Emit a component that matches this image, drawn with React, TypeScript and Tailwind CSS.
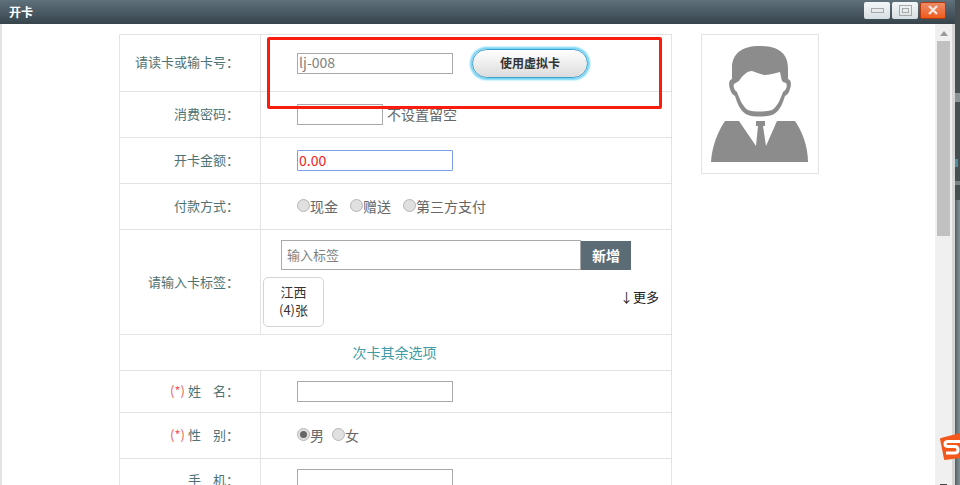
const font = { fontFamily: '"Noto Sans CJK SC", "Liberation Sans", sans-serif' };

const Avatar = () => (
  <svg viewBox="0 0 116 138" className="h-[138px] w-[116px]">
    <path
      fill="#8c8c8c"
      fillRule="evenodd"
      d="M58 11C39 11 30 19 30 33V44C26 45 27 51 28 54C29 58 31 60 33 61C36 71 40 78 46 80C51 82 65 82 70 80C76 78 80 71 83 61C85 60 87 58 88 54C89 51 90 45 86 44V33C86 19 77 11 58 11ZM37 46C40 41 45 36 50 36C54 37 57 39 62 40C67 40 73 38 78 37C79 41 79 45 81 47L84 48C86 51 84 55 81 57C78 65 75 72 70 75C65 77 51 77 46 75C41 72 38 65 35 57C32 55 31 51 32 49Z"
    />
    <path
      fill="#8c8c8c"
      d="M23 86H37L54 111L56 91H54V86H63V91H61L64 111L75 86H93C100 96 106 111 106 127H9C10 111 16 96 23 86Z"
    />
  </svg>
);

const Radio = ({ checked }: { checked?: boolean }) => (
  <span className="mb-[3px] inline-flex h-[13px] w-[13px] flex-none items-center justify-center rounded-full border border-[#b5b5b5] bg-[#e0e0e0]">
    {checked && <span className="h-[7px] w-[7px] rounded-full bg-[#666]" />}
  </span>
);

const Label = ({ children, className = 'pb-[2px]' }: { children: React.ReactNode; className?: string }) => (
  <div className={`flex w-[141px] flex-none items-center justify-end border-r border-[#e3e3e3] pr-[21px] text-[13px] text-[#4e7273] ${className}`}>{children}</div>
);

const Row = ({ label, className, children }: { label: React.ReactNode; className: string; children: React.ReactNode }) => (
  <div className={`flex border-b border-[#e3e3e3] ${className}`}>
    <Label>{label}</Label>
    <div className="flex flex-1 items-center pl-[36px] text-[14px] text-[#666]">{children}</div>
  </div>
);

const TextBox = ({ className = 'w-[156px]', value = '' }: { className?: string; value?: string }) => (
  <div className={`flex h-[21px] flex-none items-center border border-[#a9a9a9] px-px pb-[2px] text-[14px] leading-none text-[#808080] ${className}`}>{value}</div>
);

export default function App() {
  return (
    <div className="relative flex h-[485px] w-[960px] overflow-hidden bg-white" style={font}>
      <div className="flex w-[955px] flex-none flex-col">
        <div className="flex h-[24px] flex-none items-center justify-between bg-gradient-to-b from-[#5f717c] to-[#37444c] pr-[9px] pl-[9px]">
          <span className="text-[12px] font-bold text-white">开卡</span>
          <div className="mb-[4px] flex gap-[2px]">
            <div className="flex h-[17px] w-[26px] items-center justify-center rounded-[2px] bg-gradient-to-b from-[#f4f7f8] to-[#d6dfe3]">
              <span className="h-[5px] w-[13px] border border-[#a8a8a8]" />
            </div>
            <div className="flex h-[17px] w-[26px] items-center justify-center rounded-[2px] bg-gradient-to-b from-[#f4f7f8] to-[#d6dfe3]">
              <span className="flex h-[11px] w-[13px] items-center justify-center border border-[#a8a8a8]">
                <span className="h-[5px] w-[7px] border border-[#a8a8a8]" />
              </span>
            </div>
            <div className="flex h-[17px] w-[26px] items-center justify-center rounded-[2px] border border-[#b33a10] bg-gradient-to-b from-[#ee8a66] to-[#ee5a14]">
              <svg viewBox="0 0 12 10" className="h-[10px] w-[12px]">
                <path d="M2 1l8 8M10 1L2 9" stroke="#f4e6e0" strokeWidth="2.4" />
              </svg>
            </div>
          </div>
        </div>

        <div className="flex min-h-0 flex-1">
          <div className="flex flex-1 items-start border-l-2 border-[#e2e2e2] pt-[10px] pl-[117px]">
            <div className="w-[553px] flex-none border border-b-0 border-[#e3e3e3]">
              <Row label="请读卡或输卡号：" className="h-[57px]">
                <TextBox value="lj-008" />
                <button className="ml-[19px] h-[29px] w-[116px] rounded-full border border-[#3f9fcb] bg-gradient-to-b from-white to-[#dcdcdc] text-[12px] font-bold text-[#333] shadow-[0_0_2px_2px_#6fd3f5]">
                  使用虚拟卡
                </button>
              </Row>
              <Row label="消费密码：" className="h-[46px]">
                <TextBox className="w-[86px]" />
                <span className="ml-[4px]">不设置留空</span>
              </Row>
              <Row label="开卡金额：" className="h-[46px]">
                <TextBox className="w-[156px] rounded-[1px] !border-[#7a9fe6] !text-[#f01c1c]" value="0.00" />
              </Row>
              <Row label="付款方式：" className="h-[46px]">
                <Radio />现金
                <span className="ml-[12px] flex items-center"><Radio />赠送</span>
                <span className="ml-[12px] flex items-center"><Radio />第三方支付</span>
              </Row>
              <div className="flex h-[105px] border-b border-[#e3e3e3]">
                <Label className="pb-0">请输入卡标签：</Label>
                <div className="flex flex-1 flex-col pt-[10px] pl-[2px]">
                  <div className="ml-[18px] flex items-end">
                    <div className="flex h-[30px] w-[300px] items-center border border-[#a9a9a9] pl-[5px] text-[13px] text-[#808080]">输入标签</div>
                    <div className="flex h-[29px] w-[50px] items-center justify-center bg-[#5b6c77] text-[14px] font-bold text-white">新增</div>
                  </div>
                  <div className="mt-[7px] flex items-start justify-between pr-[12px]">
                    <div className="flex h-[50px] w-[61px] flex-col items-center justify-center rounded-[5px] border border-[#d4d4d4] pb-[2px] text-[13px] leading-[18px] text-[#333]">
                      <span>江西</span>
                      <span>(4)张</span>
                    </div>
                    <span className="mt-[10px] text-[13px] text-[#222]">↓更多</span>
                  </div>
                </div>
              </div>
              <div className="flex h-[36px] items-center justify-center border-b border-[#e3e3e3] pr-[2px] text-[14px] text-[#3f9ca5]">次卡其余选项</div>
              <Row label={<><span className="mr-[3px] text-[#f15a5a]">(*)</span>姓<span className="ml-[12px]">名：</span></>} className="h-[42px]">
                <TextBox />
              </Row>
              <Row label={<><span className="mr-[3px] text-[#f15a5a]">(*)</span>性<span className="ml-[12px]">别：</span></>} className="h-[46px]">
                <Radio checked />男
                <span className="ml-[8px] flex items-center"><Radio />女</span>
              </Row>
              <div className="flex h-[27px] overflow-hidden">
                <div className="flex w-[141px] flex-none justify-end border-r border-[#e3e3e3] pt-[12px] pr-[21px] text-[13px] leading-[18px] text-[#4e7273]">
                  手<span className="ml-[12px]">机：</span>
                </div>
                <div className="flex-1 pt-[10px] pl-[36px]">
                  <TextBox />
                </div>
              </div>
            </div>
            <div className="ml-[29px] flex h-[140px] w-[118px] flex-none items-center justify-center border border-[#e3e3e3]">
              <Avatar />
            </div>
          </div>

          <div className="flex w-[17px] flex-none flex-col items-center bg-[#f0f0f0]">
            <div className="mt-[7px] h-0 w-0 border-x-[4px] border-b-[5px] border-x-transparent border-b-[#9a9a9a]" />
            <div className="mt-[5px] h-[195px] w-[13px] bg-[#c1c1c1]" />
          </div>
          <div className="w-[3px] flex-none bg-[#d6d6d6]" />
        </div>
      </div>

      {/* bit of the page behind the dialog */}
      <div className="flex w-[5px] flex-none flex-col">
        <div className="flex h-[200px] flex-none flex-col items-start bg-[#474f52]">
          <span className="mt-[93px] h-[9px] w-[5px] bg-[#8d9498]" />
          <span className="mt-[57px] h-[8px] w-[3px] bg-[#4d8f9b]" />
          <span className="mt-[14px] h-[4px] w-[5px] bg-[#7c8387]" />
        </div>
        <div className="flex-1 bg-gradient-to-r from-[#566064] to-[#7f9598]" />
      </div>

      {/* annotation drawn on top of the screenshot */}
      <div className="absolute top-[37px] left-[267px] h-[72px] w-[395px] rounded-[2px] border-[3px] border-[#fb1c10]" />

      {/* floating input method badge */}
      <svg viewBox="0 0 20 27" className="absolute top-[433px] left-[940px] h-[27px] w-[20px]">
        <path d="M1 5Q0 5 0 6L4 26Q4 27 5 27L20 25V0Z" fill="#f4581c" />
        <path d="M20 8.5H8C4 8.5 4 13.500 8 13.500H15C19 13.500 19 20 15 20H6" stroke="#fff" strokeWidth="3" fill="none" />
      </svg>
      <span className="absolute top-[484px] left-[940px] h-px w-[7px] bg-[#444]" />
    </div>
  );
}
